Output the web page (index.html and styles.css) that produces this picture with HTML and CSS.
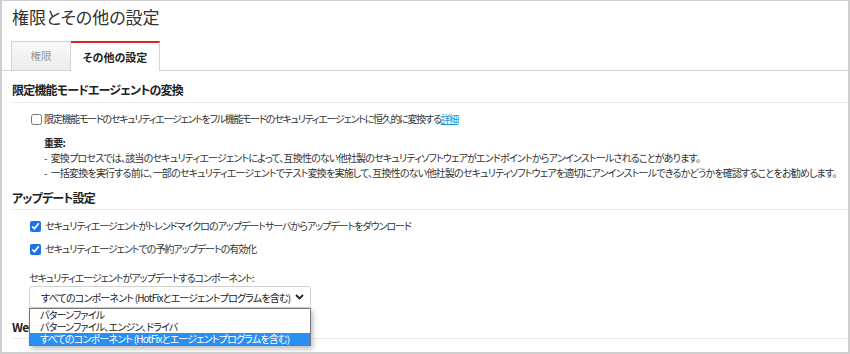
FILE: index.html
```html
<!DOCTYPE html>
<html lang="ja">
<head>
  <meta charset="UTF-8">
  <title>権限とその他の設定</title>
  <link rel="stylesheet" href="styles.css">
</head>
<body>
  <div class="frame">
    <h1 class="page-title">権限とその他の設定</h1>

    <div class="tabs">
      <div class="tab">権限</div>
      <div class="tab active">その他の設定</div>
    </div>

    <!-- 限定機能モード -->
    <div class="section">
      <h2 class="section-title">限定機能モードエージェントの変換</h2>
      <label class="check-row">
        <input type="checkbox" class="check">
        <span>限定機能モードのセキュリティエージェントをフル機能モードのセキュリティエージェントに恒久的に変換する<a href="#" class="link">詳細</a></span>
      </label>
      <div class="note">
        <p class="note-title">重要:</p>
        <p><span class="dash">-</span>変換プロセスでは、該当のセキュリティエージェントによって、互換性のない他社製のセキュリティソフトウェアがエンドポイントからアンインストールされることがあります。</p>
        <p><span class="dash">-</span>一括変換を実行する前に、一部のセキュリティエージェントでテスト変換を実施して、互換性のない他社製のセキュリティソフトウェアを適切にアンインストールできるかどうかを確認することをお勧めします。</p>
      </div>
    </div>

    <!-- アップデート -->
    <div class="section">
      <h2 class="section-title">アップデート設定</h2>
      <label class="check-row checked-row">
        <input type="checkbox" class="check" checked>
        <span>セキュリティエージェントがトレンドマイクロのアップデートサーバからアップデートをダウンロード</span>
      </label>
      <label class="check-row checked-row second">
        <input type="checkbox" class="check" checked>
        <span>セキュリティエージェントでの予約アップデートの有効化</span>
      </label>

      <div class="field">
        <div class="field-label">セキュリティエージェントがアップデートするコンポーネント:</div>
        <div class="select-wrap">
          <div class="select">
            <span>すべてのコンポーネント (HotFixとエージェントプログラムを含む)</span>
            <svg class="chevron" width="9" height="6" viewBox="0 0 9 6"><path d="M1 1l3.5 3.5L8 1" fill="none" stroke="#222" stroke-width="1.8"/></svg>
          </div>
          <ul class="dropdown">
            <li>パターンファイル</li>
            <li>パターンファイル、エンジン、ドライバ</li>
            <li class="selected">すべてのコンポーネント (HotFixとエージェントプログラムを含む)</li>
          </ul>
        </div>
      </div>
    </div>

    <div class="section">
      <h2 class="section-title web-title">Webレピュテーション</h2>
    </div>
  </div>
</body>
</html>
```

FILE: styles.css
```css
* {
  margin: 0;
  padding: 0;
  box-sizing: border-box;
}

body {
  font-family: "Noto Sans CJK JP", "Noto Sans", sans-serif;
  font-feature-settings: "palt";
  color: #333;
  background-color: #fff;
  overflow: hidden;
}

.frame {
  width: 850px;
  height: 354px;
  border: 2px solid #cfcfcf;
  border-top-width: 1px;
  overflow: hidden;
}

.page-title {
  font-size: 17px;
  font-weight: 400;
  line-height: 24px;
  color: #333;
  padding: 4px 10px 0;
}

/* Tabs */
.tabs {
  display: flex;
  align-items: flex-end;
  height: 30px;
  margin-top: 12px;
  padding-left: 9px;
  border-bottom: 1px solid #d4d4d4;
}

.tab {
  height: 29px;
  line-height: 28px;
  font-size: 10.5px;
  text-align: center;
  color: #999;
  border: 1px solid #d4d4d4;
  border-bottom: none;
  background: linear-gradient(#fafafa, #ececec);
}

.tab:first-child {
  width: 60px;
}

.tab.active {
  width: 89px;
  height: 30px;
  margin-bottom: -1px;
  border-left: none;
  border-top: 2px solid #e0242b;
  background: #fff;
  color: #222;
  font-size: 11px;
  font-weight: 700;
}

/* Sections */
.section {
  padding-left: 10px;
}

.section-title {
  font-size: 12px;
  font-weight: 700;
  line-height: 18px;
  letter-spacing: -0.8px;
  color: #222;
  margin-top: 9px;
  padding-bottom: 2px;
  border-bottom: 1px solid #ebebeb;
}

.check-row {
  display: flex;
  align-items: center;
  gap: 2px;
  margin-top: 8px;
  padding-left: 19px;
  font-size: 10px;
  letter-spacing: -1.25px;
  line-height: 16px;
  color: #333;
  white-space: nowrap;
}

.check {
  width: 11px;
  height: 11px;
  margin: 0;
  flex: none;
  accent-color: #1a73e8;
}

.link {
  color: #1a8fd8;
  text-decoration: underline;
}

.note {
  margin-top: 8px;
  padding-left: 32px;
  font-size: 10px;
  letter-spacing: -0.8px;
  line-height: 15px;
  white-space: nowrap;
}

.note-title {
  font-weight: 700;
  color: #222;
}

.dash {
  margin-right: 4px;
}

.section:nth-of-type(2) .section-title {
  margin-top: 10px;
  padding-bottom: 3px;
}

.checked-row {
  padding-left: 18px;
  gap: 4px;
  letter-spacing: -1px;
}

.checked-row.second {
  margin-top: 7px;
}

/* Component select */
.field {
  margin-top: 13px;
  padding-left: 17px;
  font-size: 10px;
  letter-spacing: -1px;
  white-space: nowrap;
}

.field-label {
  line-height: 16px;
}

.select-wrap {
  position: relative;
  width: 282px;
}

.select {
  display: flex;
  align-items: center;
  justify-content: space-between;
  height: 22px;
  padding: 0 6px 0 11px;
  border: 1px solid #d0d0d0;
  border-radius: 3px;
  background: #fff;
  color: #222;
  letter-spacing: -0.8px;
}

.dropdown {
  position: absolute;
  top: 22px;
  left: 0;
  width: 282px;
  list-style: none;
  border: 1px solid #767676;
  background: #fff;
  box-shadow: 2px 3px 5px rgba(0, 0, 0, 0.25);
  z-index: 2;
}

.dropdown li {
  height: 12px;
  line-height: 12px;
  padding-left: 10px;
  color: #222;
  letter-spacing: -0.8px;
}

.dropdown li.selected {
  background: #2a8ff0;
  color: #fff;
}

.web-title {
  margin-top: 10px;
}
```
